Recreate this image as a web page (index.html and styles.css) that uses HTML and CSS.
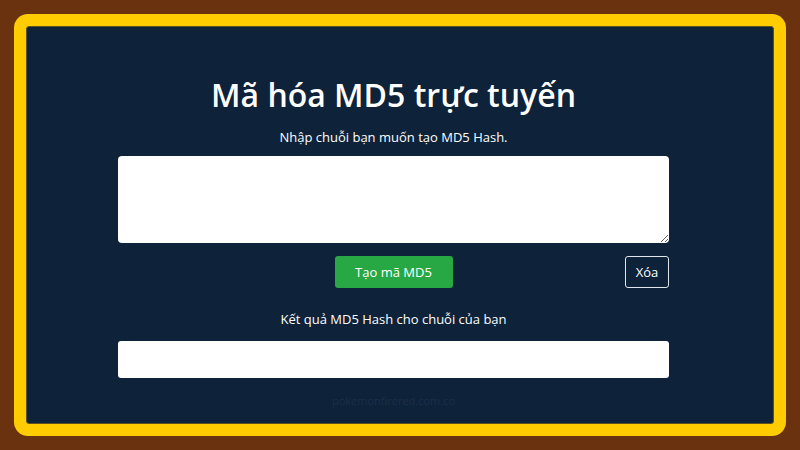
FILE: index.html
```html
<html>
<head>
    <title>Mã hóa MD5 trực tuyến</title>
    <link rel="stylesheet" href="styles.css">
</head>
<body>
    <div id="frame">
        <div id="panel">
            <h1>Mã hóa MD5 trực tuyến</h1>
            <div class="label">Nhập chuỗi bạn muốn tạo MD5 Hash.</div>
            <textarea id="input-text"></textarea>
            <div id="actions">
                <span></span>
                <button id="hash-btn">Tạo mã MD5</button>
                <button id="clear-btn">Xóa</button>
            </div>
            <div class="label">Kết quả MD5 Hash cho chuỗi của bạn</div>
            <input type="text" id="output-text">
            <div id="watermark">pokemonfirered.com.co</div>
        </div>
    </div>
</body>
</html>
```

FILE: styles.css
```css
body {
    margin: 0;
    background-color: #6b3210;
    font-family: "Open Sans", "Noto Sans", sans-serif;
}

#frame {
    margin: 14px;
    height: 422px;
    box-sizing: border-box;
    background-color: #ffcc00;
    border-radius: 14px;
    padding: 12px;
}

#panel {
    height: 100%;
    box-sizing: border-box;
    background-color: #0e2239;
    border-radius: 3px;
    border: 1px solid #5a5220;
    display: flex;
    flex-direction: column;
    align-items: center;
    padding: 0 104px 0 91px;
    color: white;
}

h1 {
    font-size: 32px;
    font-weight: 600;
    margin: 48px 0 13px 0;
    line-height: 40px;
}

.label {
    font-size: 13px;
    line-height: 18px;
    margin-bottom: 10px;
}

#input-text {
    width: 100%;
    height: 87px;
    border: none;
    border-radius: 4px;
    background-color: white;
    display: block;
}

#actions {
    width: 100%;
    display: grid;
    grid-template-columns: 1fr auto 1fr;
    margin: 13px 0 22px 0;
}

#hash-btn {
    background-color: #28a745;
    color: white;
    border: none;
    border-radius: 3px;
    font-family: inherit;
    font-size: 13px;
    width: 118px;
    height: 32px;
}

#clear-btn {
    justify-self: end;
    background-color: transparent;
    color: white;
    border: 1px solid #dfe6ee;
    border-radius: 3px;
    font-family: inherit;
    font-size: 13px;
    width: 44px;
    height: 32px;
    padding: 0;
}

#output-text {
    width: 100%;
    height: 37px;
    border: none;
    border-radius: 3px;
    background-color: white;
    box-sizing: border-box;
    margin-top: 3px;
}

#watermark {
    font-size: 11px;
    color: #1b2f47;
    margin-top: 15px;
}
```
